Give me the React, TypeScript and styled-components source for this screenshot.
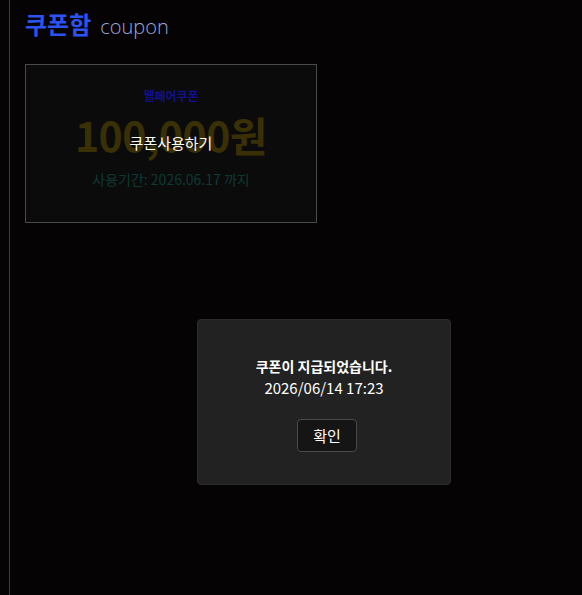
import React from "react";
import styled, { createGlobalStyle } from "styled-components";

const Global = createGlobalStyle`
  html, body { margin: 0; padding: 0; background: #050304; }
  body { font-family: "Noto Sans CJK KR", "Noto Sans", sans-serif; color: #fff; }
`;

const Page = styled.div`
  min-height: 595px;
  padding-left: 9px;
  box-sizing: border-box;
  display: flex;
`;

const Main = styled.main`
  flex: 1;
  border-left: 1px solid #3e3e3e;
  min-height: 595px;
  padding: 6px 15px 0;
`;

const Title = styled.h1`
  margin: 0;
  display: flex;
  align-items: baseline;
  gap: 9px;
  font-size: 24px;
  font-weight: 700;
  color: #2b53f2;
  line-height: 36px;
`;

const Sub = styled.span`
  font-family: "Open Sans", "Noto Sans", sans-serif;
  font-size: 20px;
  font-weight: 300;
  color: #9aa6dc;
`;

const Card = styled.div`
  position: relative;
  margin-top: 19px;
  width: 292px;
  height: 159px;
  box-sizing: border-box;
  border: 1px solid #4a4a4a;
  background: #0b0b0b;
  display: flex;
  flex-direction: column;
  align-items: center;
`;

const Kind = styled.div`
  margin-top: 23px;
  font-size: 12px;
  font-weight: 700;
  color: #12108a;
  line-height: 16px;
`;

const Amount = styled.div`
  margin-top: 4px;
  font-size: 41px;
  font-weight: 700;
  color: #3a3005;
  line-height: 52px;
  letter-spacing: -0.5px;
`;

const Period = styled.div`
  margin-top: 9px;
  font-size: 14px;
  color: #0d3a33;
  line-height: 20px;
`;

const UseButton = styled.div`
  position: absolute;
  inset: 0;
  display: flex;
  align-items: center;
  justify-content: center;
  font-size: 15px;
  color: #fff;
  padding-bottom: 2px;
`;

const Modal = styled.div`
  position: absolute;
  left: 197px;
  top: 319px;
  width: 254px;
  height: 166px;
  box-sizing: border-box;
  background: #232222;
  border: 1px solid #2e2d2d;
  border-radius: 4px;
  display: flex;
  flex-direction: column;
  align-items: center;
  padding-top: 36px;
`;

const Msg = styled.div`
  font-size: 14px;
  font-weight: 700;
  line-height: 21px;
  color: #fff;
`;

const Date = styled.div`
  font-size: 15px;
  line-height: 22px;
  color: #fff;
`;

const Ok = styled.button`
  margin-top: 20px;
  margin-left: 6px;
  width: 60px;
  height: 33px;
  box-sizing: border-box;
  background: #161515;
  border: 1px solid #4a4a4a;
  border-radius: 4px;
  color: #fff;
  font-family: "Noto Sans CJK KR", sans-serif;
  font-size: 15px;
  padding: 0;
`;

export default function App() {
  return (
    <>
      <Global />
      <Page>
        <Main>
          <Title>
            쿠폰함 <Sub>coupon</Sub>
          </Title>
          <Card>
            <Kind>웰페어쿠폰</Kind>
            <Amount>100,000원</Amount>
            <Period>사용기간: 2026.06.17 까지</Period>
            <UseButton>쿠폰사용하기</UseButton>
          </Card>
        </Main>
      </Page>
      <Modal>
        <Msg>쿠폰이 지급되었습니다.</Msg>
        <Date>2026/06/14 17:23</Date>
        <Ok>확인</Ok>
      </Modal>
    </>
  );
}
